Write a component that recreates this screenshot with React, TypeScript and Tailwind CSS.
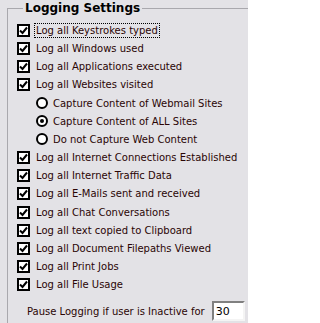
import React from "react"

const font = { fontFamily: '"DejaVu Sans", Verdana, sans-serif' }

function Check({ label, focused, extra }: { label: string; focused?: boolean; extra?: boolean }) {
  return (
    <div className={`flex items-center h-[18px] ${extra ? "mt-[1px]" : ""}`}>
      <span className="w-[13px] h-[13px] border-2 border-black bg-white flex items-center justify-center shrink-0">
        <svg width="9" height="9" viewBox="0 0 9 9">
          <path d="M1 4.5 L3.5 7 L8 1.5" fill="none" stroke="black" strokeWidth="2" />
        </svg>
      </span>
      <span
        className={`ml-[5px] px-[1px] leading-[13px] whitespace-nowrap ${
          focused ? "outline outline-1 outline-dotted outline-black" : ""
        }`}
      >
        {label}
      </span>
    </div>
  )
}

function Radio({ label, checked, extra }: { label: string; checked?: boolean; extra?: boolean }) {
  return (
    <div className={`flex items-center h-[18px] pl-[19px] ${extra ? "mt-[1px]" : ""}`}>
      <span className="w-[12px] h-[12px] rounded-full border-2 border-black bg-white flex items-center justify-center shrink-0">
        {checked && <span className="w-[4px] h-[4px] rounded-full bg-black" />}
      </span>
      <span className="ml-[5px] whitespace-nowrap">{label}</span>
    </div>
  )
}

export default function App() {
  return (
    <div
      className="w-[248px] h-[323px] overflow-hidden bg-[#e3e2e6] text-[10px] text-[#2a0505] pl-[7px] pt-[2px]"
      style={font}
    >
      <fieldset className="w-full h-[340px] border-t border-l border-[#a9a8ad] pl-[9px] pt-[6px]">
        <legend className="ml-[6px] px-[2px] font-bold text-[12px] text-black leading-[13px]">
          Logging Settings
        </legend>
        <Check label="Log all Keystrokes typed" focused />
        <Check label="Log all Windows used" />
        <Check label="Log all Applications executed" />
        <Check label="Log all Websites visited" />
        <Radio label="Capture Content of Webmail Sites" extra />
        <Radio label="Capture Content of ALL Sites" checked />
        <Radio label="Do not Capture Web Content" />
        <Check label="Log all Internet Connections Established" />
        <Check label="Log all Internet Traffic Data" />
        <Check label="Log all E-Mails sent and received" />
        <Check label="Log all Chat Conversations" extra />
        <Check label="Log all text copied to Clipboard" />
        <Check label="Log all Document Filepaths Viewed" />
        <Check label="Log all Print Jobs" />
        <Check label="Log all File Usage" />
        <div className="flex items-center mt-[8px] pl-[10px]">
          <span className="whitespace-nowrap">Pause Logging if user is Inactive for</span>
          <input
            defaultValue="30"
            className="ml-[7px] w-[33px] h-[20px] bg-white border-2 border-t-[#808080] border-l-[#808080] border-b-[#f4f4f4] border-r-[#f4f4f4] px-[2px] text-[11px] text-black outline-none"
            style={font}
          />
        </div>
      </fieldset>
    </div>
  )
}
